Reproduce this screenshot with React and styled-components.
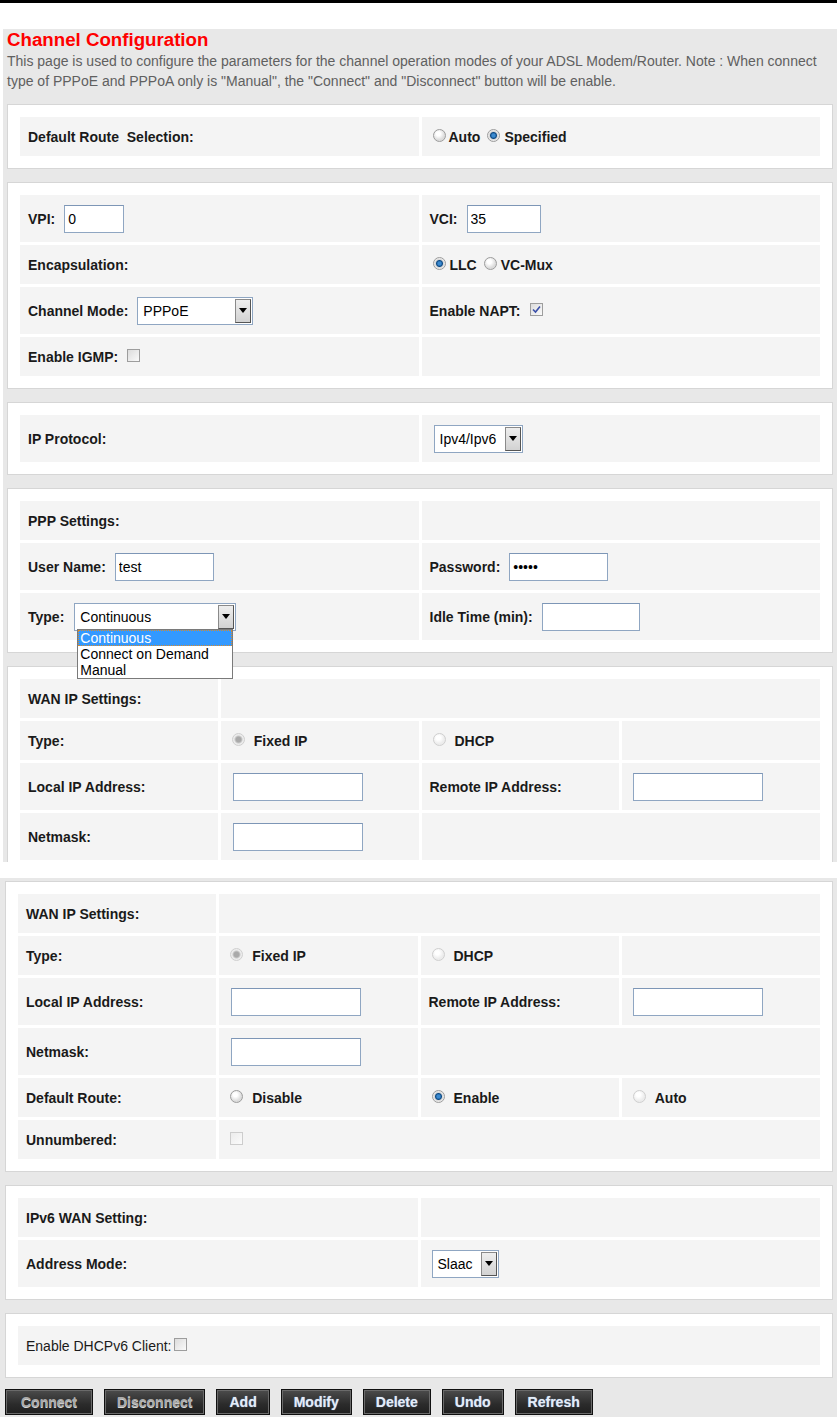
import React from "react";
import styled, { createGlobalStyle } from "styled-components";

const GlobalStyle = createGlobalStyle`
  html, body {
    margin: 0;
    padding: 0;
    background: #ffffff;
  }
  body {
    font-family: "Liberation Sans", Arial, sans-serif;
  }
`;

const Page = styled.div`
  width: 837px;
  border-top: 3px solid #000;
`;

const Shot = styled.div`
  background: #e8e8e8;
  margin: ${(p) => p.$mt}px 0 0 ${(p) => p.$ml}px;
  padding: ${(p) => p.$pad};
  height: ${(p) => (p.$h ? `${p.$h}px` : "auto")};
  overflow: hidden;
  box-sizing: border-box;
`;

const Title = styled.h1`
  margin: 0;
  font-size: 18.7px;
  line-height: 22px;
  font-weight: bold;
  color: #ff0000;
`;

const Desc = styled.p`
  margin: 0 0 13px;
  font-size: 14px;
  line-height: 20px;
  color: #606060;
`;

const Box = styled.div`
  background: #fff;
  border: 1px solid #d6d6d6;
  padding: 12px;
  margin-bottom: ${(p) => (p.$mb !== undefined ? p.$mb : 13)}px;
`;

const Grid = styled.div`
  display: grid;
  grid-template-columns: repeat(4, 1fr);
  gap: 3px;
`;

const Cell = styled.div`
  grid-column: span ${(p) => p.$span || 2};
  min-height: ${(p) => (p.$tall ? 47 : 39)}px;
  background: #f4f4f4;
  display: flex;
  align-items: center;
  padding-left: 8px;
  font-size: 14px;
  font-weight: ${(p) => (p.$plain ? "normal" : "bold")};
  color: #1a1a1a;
  white-space: nowrap;
  position: relative;
`;

const Radio = styled.span`
  display: inline-block;
  flex: none;
  width: 13px;
  height: 13px;
  border-radius: 50%;
  box-sizing: border-box;
  border: 1px solid ${(p) => (p.$off ? "#cfcfcf" : "#9c9c9c")};
  background: ${(p) =>
    p.$checked
      ? p.$off
        ? "radial-gradient(circle, #a9a9a9 0 2.5px, #c9c9c9 3.5px, #ececec 4.5px)"
        : "radial-gradient(circle, #3b8ad0 0 1.5px, #0f4c86 3px, #d8d8d8 4px, #f8f8f8 6px)"
      : p.$off
      ? "radial-gradient(circle at 40% 35%, #ffffff 0 2px, #ececec 6px)"
      : "radial-gradient(circle at 40% 35%, #ffffff 0 2px, #dcdcdc 6px)"};
  margin: -2px ${(p) => (p.$mr !== undefined ? p.$mr : 9)}px 0
    ${(p) => (p.$ml !== undefined ? p.$ml : 3)}px;
`;

const Check = styled.span`
  display: inline-flex;
  align-items: center;
  justify-content: center;
  flex: none;
  width: 13px;
  height: 13px;
  box-sizing: border-box;
  border: 1px solid ${(p) => (p.$off ? "#cdcdcd" : "#9d9d9d")};
  background: ${(p) =>
    p.$off
      ? "linear-gradient(135deg, #ececec, #fbfbfb)"
      : "linear-gradient(135deg, #dcdcdc, #fafafa)"};
  margin: -2px 0 0 ${(p) => (p.$ml !== undefined ? p.$ml : 9)}px;
`;

const Field = styled.input`
  box-sizing: border-box;
  width: ${(p) => p.$w}px;
  height: 28px;
  margin: 0 0 0 ${(p) => (p.$ml !== undefined ? p.$ml : 9)}px;
  padding: 0 3px;
  border: 1px solid #8fa6c2;
  border-top-color: #7d96b6;
  background: #fff;
  font-family: "Liberation Sans", Arial, sans-serif;
  font-size: 14px;
  color: #000;
  outline: none;
`;

const SelectWrap = styled.div`
  position: relative;
  display: inline-flex;
  margin-left: ${(p) => (p.$ml !== undefined ? p.$ml : 9)}px;
`;

const SelectBox = styled.div`
  display: flex;
  align-items: stretch;
  box-sizing: border-box;
  width: ${(p) => p.$w}px;
  height: 28px;
  border: 1px solid #8fa6c2;
  background: #fff;
  padding: 1px;
`;

const SelectText = styled.span`
  flex: 1;
  display: flex;
  align-items: center;
  padding-left: 4px;
  font-size: 14px;
  font-weight: normal;
  color: #000;
`;

const SelectArrow = styled.span`
  width: 16px;
  box-sizing: border-box;
  border: 1px solid #555;
  border-top-color: #8a8a8a;
  border-left-color: #8a8a8a;
  background: linear-gradient(#eeeeee, #d2d2d2);
  display: flex;
  align-items: center;
  justify-content: center;

  &::after {
    content: "";
    border-left: 4px solid transparent;
    border-right: 4px solid transparent;
    border-top: 5px solid #000;
  }
`;

const DropList = styled.ul`
  position: absolute;
  top: 26px;
  left: 3px;
  z-index: 5;
  width: 156px;
  box-sizing: border-box;
  margin: 0;
  padding: 0;
  list-style: none;
  background: #fff;
  border: 1px solid #7a7a7a;
`;

const DropItem = styled.li`
  height: 16px;
  line-height: 16px;
  padding-left: 2px;
  font-size: 14px;
  font-weight: normal;
  color: ${(p) => (p.$active ? "#fff" : "#000")};
  background: ${(p) => (p.$active ? "#3399ff" : "transparent")};
  outline: ${(p) => (p.$active ? "1px dotted #d88a2c" : "none")};
  outline-offset: -1px;
`;

const ButtonBar = styled.div`
  display: flex;
  gap: 11px;
`;

const Btn = styled.button`
  height: 26px;
  padding: 0 ${(p) => p.$pad || 12}px;
  border: 1px solid #101010;
  box-shadow: inset 0 0 0 1px #6a6a6a;
  background: linear-gradient(#4c4c4c, #2b2b2b 60%, #1f1f1f);
  font-family: "Liberation Sans", Arial, sans-serif;
  font-size: 14px;
  font-weight: bold;
  color: ${(p) => (p.disabled ? "#a9a9a9" : "#e4ecf6")};
  text-shadow: ${(p) =>
    p.disabled ? "0 1px 0 #d8d8d8" : "0 0 1px #7fa6d8"};
  cursor: pointer;
`;

function Select({ w, ml, value, children }) {
  return (
    <SelectWrap $ml={ml}>
      <SelectBox $w={w}>
        <SelectText>{value}</SelectText>
        <SelectArrow />
      </SelectBox>
      {children}
    </SelectWrap>
  );
}

function Tick() {
  return (
    <svg width="9" height="9" viewBox="0 0 9 9">
      <path d="M1 4.5 L3.5 7 L8 1.5" fill="none" stroke="#3a4fa8" strokeWidth="1.6" />
    </svg>
  );
}

function WanTopRows() {
  return (
    <>
      <Cell $span={1}>WAN IP Settings:</Cell>
      <Cell $span={3} />
      <Cell $span={1}>Type:</Cell>
      <Cell $span={1}>
        <Radio $checked $off $ml={3} />
        Fixed IP
      </Cell>
      <Cell $span={1}>
        <Radio $off $ml={3} />
        DHCP
      </Cell>
      <Cell $span={1} />
      <Cell $span={1} $tall>
        Local IP Address:
      </Cell>
      <Cell $span={1} $tall>
        <Field $w={130} $ml={4} readOnly />
      </Cell>
      <Cell $span={1} $tall>
        Remote IP Address:
      </Cell>
      <Cell $span={1} $tall>
        <Field $w={130} $ml={3} readOnly />
      </Cell>
      <Cell $span={1} $tall>
        Netmask:
      </Cell>
      <Cell $span={1} $tall>
        <Field $w={130} $ml={4} readOnly />
      </Cell>
      <Cell $span={2} $tall />
    </>
  );
}

export default function App() {
  return (
    <>
      <GlobalStyle />
      <Page>
        <Shot $mt={26} $ml={3} $pad="0 4px 0 4px" $h={833}>
          <Title>Channel Configuration</Title>
          <Desc>
            This page is used to configure the parameters for the channel
            operation modes of your ADSL Modem/Router. Note : When connect
            type of PPPoE and PPPoA only is "Manual", the "Connect" and
            "Disconnect" button will be enable.
          </Desc>

          <Box>
            <Grid>
              <Cell>Default Route&nbsp; Selection:</Cell>
              <Cell>
                <Radio $ml={3} $mr={3} />
                Auto
                <Radio $checked $ml={7} $mr={4} />
                Specified
              </Cell>
            </Grid>
          </Box>

          <Box>
            <Grid>
              <Cell $tall>
                VPI:
                <Field $w={60} defaultValue="0" readOnly />
              </Cell>
              <Cell $tall>
                VCI:
                <Field $w={74} defaultValue="35" readOnly />
              </Cell>
              <Cell>Encapsulation:</Cell>
              <Cell>
                <Radio $checked $ml={3} $mr={4} />
                LLC
                <Radio $ml={7} $mr={4} />
                VC-Mux
              </Cell>
              <Cell $tall>
                Channel Mode:
                <Select w={116} value="PPPoE" />
              </Cell>
              <Cell $tall>
                Enable NAPT:
                <Check>
                  <Tick />
                </Check>
              </Cell>
              <Cell>
                Enable IGMP:
                <Check />
              </Cell>
              <Cell />
            </Grid>
          </Box>

          <Box>
            <Grid>
              <Cell $tall>IP Protocol:</Cell>
              <Cell $tall>
                <Select w={89} ml={4} value="Ipv4/Ipv6" />
              </Cell>
            </Grid>
          </Box>

          <Box>
            <Grid>
              <Cell>PPP Settings:</Cell>
              <Cell />
              <Cell $tall>
                User Name:
                <Field $w={99} defaultValue="test" readOnly />
              </Cell>
              <Cell $tall>
                Password:
                <Field $w={99} type="password" defaultValue="abcde" readOnly />
              </Cell>
              <Cell $tall>
                Type:
                <Select w={162} ml={10} value="Continuous">
                  <DropList>
                    <DropItem $active>Continuous</DropItem>
                    <DropItem>Connect on Demand</DropItem>
                    <DropItem>Manual</DropItem>
                  </DropList>
                </Select>
              </Cell>
              <Cell $tall>
                Idle Time (min):
                <Field $w={98} readOnly />
              </Cell>
            </Grid>
          </Box>

          <Box>
            <Grid>
              <WanTopRows />
            </Grid>
          </Box>
        </Shot>

        <Shot $mt={16} $ml={0} $pad="3px 4px 3px 5px">
          <Box>
            <Grid>
              <WanTopRows />
              <Cell $span={1}>Default Route:</Cell>
              <Cell $span={1}>
                <Radio $ml={3} />
                Disable
              </Cell>
              <Cell $span={1}>
                <Radio $checked $ml={3} />
                Enable
              </Cell>
              <Cell $span={1}>
                <Radio $off $ml={3} />
                Auto
              </Cell>
              <Cell $span={1}>Unnumbered:</Cell>
              <Cell $span={3}>
                <Check $off $ml={3} />
              </Cell>
            </Grid>
          </Box>

          <Box>
            <Grid>
              <Cell>IPv6 WAN Setting:</Cell>
              <Cell />
              <Cell $tall>Address Mode:</Cell>
              <Cell $tall>
                <Select w={67} ml={3} value="Slaac" />
              </Cell>
            </Grid>
          </Box>

          <Box $mb={11}>
            <Grid>
              <Cell $span={4} $plain>
                Enable DHCPv6 Client:
                <Check $ml={2} />
              </Cell>
            </Grid>
          </Box>

          <ButtonBar>
            <Btn disabled $pad={15}>Connect</Btn>
            <Btn disabled>Disconnect</Btn>
            <Btn>Add</Btn>
            <Btn>Modify</Btn>
            <Btn>Delete</Btn>
            <Btn>Undo</Btn>
            <Btn>Refresh</Btn>
          </ButtonBar>
        </Shot>
      </Page>
    </>
  );
}
